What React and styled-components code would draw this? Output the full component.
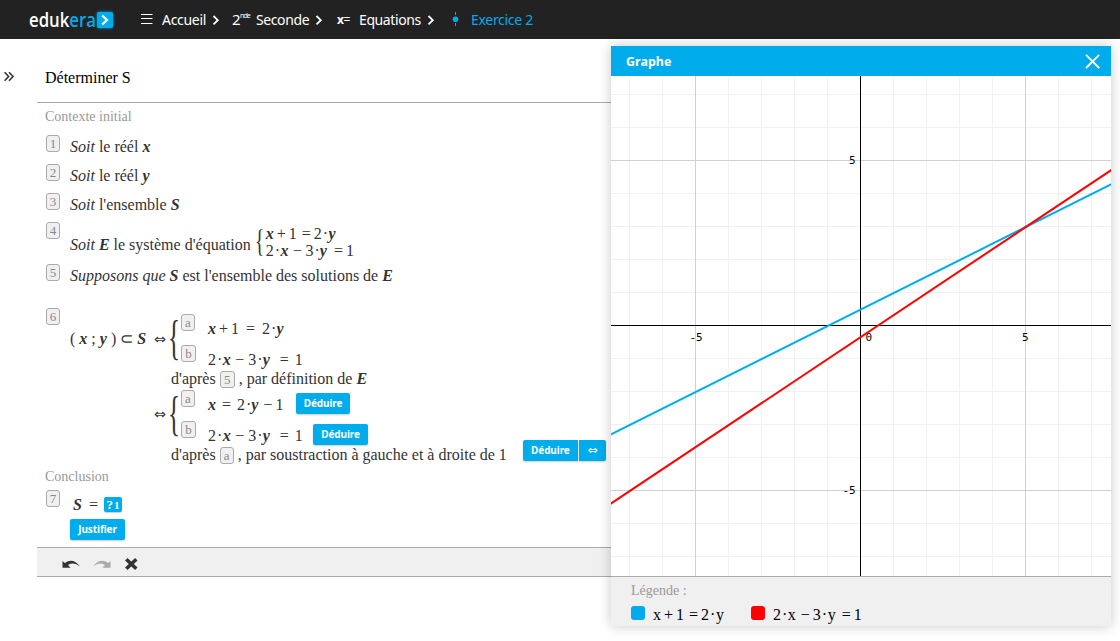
import React from 'react';
import styled, { createGlobalStyle, css } from 'styled-components';

const BLUE = '#00aceb';
const SERIF = '"Liberation Serif", "Times New Roman", serif';
const SANS = '"Noto Sans", "Open Sans", sans-serif';

const Global = createGlobalStyle`
  * { box-sizing: border-box; }
  html, body { margin: 0; background: #fff; }
  body { font: 16px/20px ${SERIF}; color: #333; overflow: hidden; }
`;

const Page = styled.div`
  position: relative;
  width: 1120px;
  height: 641px;
  overflow: hidden;
  display: flex;
  flex-direction: column;
`;

/* ---- top bar ---- */
const TopBar = styled.header`
  height: 39px;
  flex: none;
  display: flex;
  align-items: center;
  padding-left: 29px;
  background: #222;
  color: #fff;
  font-family: ${SANS};
`;
const Logo = styled.a`
  display: flex;
  align-items: center;
  width: 111px;
  height: 23px;
`;
const LogoWord = styled.span`
  font: 600 19.500px/22px "Open Sans", sans-serif;
  flex: none;
  width: 68px;
  white-space: nowrap;
  transform: scaleX(0.86);
  transform-origin: 0 50%;
  em { font-style: normal; color: ${BLUE}; }
`;
const LogoMark = styled.span`
  flex: none;
  width: 16px;
  height: 16px;
  margin-top: 1px;
  border-radius: 2px;
  background: ${BLUE};
  box-shadow: 0 0 3px ${BLUE};
  svg { display: block; }
`;
const Crumb = styled.a`
  display: flex;
  align-items: center;
  height: 23px;
  width: ${(p) => p.$w}px;
  color: ${(p) => (p.$active ? BLUE : '#fff')};
  font-size: 14px;
  line-height: 23px;
  white-space: nowrap;
`;
const CrumbIcon = styled.span`
  display: flex;
  align-items: center;
  flex: none;
  width: ${(p) => p.$w}px;
  height: 23px;
`;
const CrumbText = styled.span`
  letter-spacing: ${(p) => p.$ls ?? -0.3}px;
  flex: none;
  width: ${(p) => p.$w}px;
`;
const Level = styled.span`
  display: flex;
  font-size: 15px;
  sup { font-size: 7px; line-height: 16px; letter-spacing: -1px; margin-left: -0.5px; }
`;
const EqualsIcon = styled.span`
  font-size: 12px;
  letter-spacing: -0.5px;
  padding-left: 1px;
  b { font-size: 12px; line-height: 1; }
`;

/* ---- exercise ---- */
const Body = styled.div`
  display: flex;
  flex: 1;
`;
const Side = styled.div`
  width: 37px;
  padding: 32px 0 0 4px;
  svg { display: block; }
`;
const Exercise = styled.main`
  width: 574px;
  height: 538px;
  display: flex;
  flex-direction: column;
`;
const Title = styled.h1`
  margin: 0;
  height: 64px;
  padding: 29px 0 0 8px;
  font: 16px/20px ${SERIF};
  color: #000;
  border-bottom: 1px solid #aaa;
`;
const Section = styled.h2`
  margin: 0;
  height: ${(p) => p.$h}px;
  padding: ${(p) => p.$top}px 0 0 8px;
  font: 14px/18px ${SERIF};
  color: #999;
`;
const Row = styled.div`
  display: flex;
  height: ${(p) => p.$h}px;
  padding-left: 9px;
`;
const Badge = styled.span`
  display: inline-flex;
  flex: none;
  align-items: center;
  justify-content: center;
  width: ${(p) => p.$w || 14}px;
  height: 17px;
  margin-top: ${(p) => p.$top || 0}px;
  border: 1px solid #aaa;
  border-radius: 3px;
  background: #f0f0f0;
  color: #888;
  font-size: 13px;
  line-height: 15px;
`;
const Content = styled.div`
  margin-left: 10px;
  padding-top: ${(p) => p.$top ?? 2}px;
  white-space: nowrap;
`;
const V = styled.b`
  font-style: italic;
`;
const Op = styled.span`
  margin: 0 ${(p) => p.$r || 0}px 0 ${(p) => p.$l || 0}px;
`;
const WithSystem = styled.div`
  display: flex;
`;
const Statement = styled.div`
  padding-top: 13px;
  margin-right: 4px;
`;
const Brace = styled.span`
  flex: none;
  display: block;
  width: ${(p) => p.$w}px;
  height: ${(p) => p.$size}px;
  margin-top: ${(p) => p.$top}px;
  font-size: ${(p) => p.$size}px;
  line-height: ${(p) => p.$size}px;
  transform: scaleX(${(p) => p.$sx});
  transform-origin: 0 50%;
`;
const Lines = styled.div`
  padding-top: 3px;
  line-height: 17px;
`;
const Derivation = styled.div`
  display: flex;
  height: 76px;
`;
const Lhs = styled.div`
  display: flex;
  width: 98px;
  padding: ${(p) => p.$top}px 2px 0 0;
`;
const Arrow = styled.span`
  margin-left: auto;
  font: 14.500px/20px "DejaVu Sans", sans-serif;
`;
const Rhs = styled.div`
  flex: none;
`;
const Cases = styled.div`
  display: flex;
  height: 61px;
`;
const CaseLine = styled.div`
  display: flex;
  height: 31px;
`;
const CaseExpr = styled.div`
  padding: 11px 0 0 ${(p) => p.$l}px;
  width: ${(p) => p.$w}px;
`;
const Reason = styled.div`
  display: flex;
  height: 20px;
  margin-left: 3px;
  ${Badge} { margin: 2px 4px 0 4px; }
`;
const Button = styled.button`
  display: flex;
  align-items: center;
  justify-content: center;
  width: ${(p) => p.$w}px;
  height: 21px;
  padding: 0 0 2px;
  border: 0;
  border-radius: ${(p) => p.$radius || '2px'};
  background: ${BLUE};
  color: #fff;
  font: 700 10px/14px ${SANS};
  letter-spacing: -0.1px;
  box-shadow: 0 1px 2px rgba(0, 0, 0, 0.2);
  ${(p) => p.$top !== undefined && css`margin-top: ${p.$top}px;`}
`;
const EquivButton = styled(Button)`
  font: 12px/14px "DejaVu Sans", sans-serif;
`;
const ButtonPair = styled.div`
  display: flex;
  gap: 1px;
  margin: -5px 0 0 16px;
`;
const Answer = styled.div`
  display: flex;
  height: 20px;
`;
const Hole = styled.span`
  display: flex;
  align-items: center;
  justify-content: center;
  width: 18px;
  height: 15px;
  margin: 2px 0 0 6px;
  border-radius: 2px;
  background: ${BLUE};
  color: #fff;
  font-weight: 700;
  font-size: 13px;
  line-height: 15px;
  box-shadow: 0 1px 1px rgba(0, 0, 0, 0.2);
  small { font-size: 11px; margin: 2px 0 0 1px; }
`;
const Tools = styled.footer`
  height: 30px;
  margin-top: auto;
  display: flex;
  align-items: center;
  padding: 3px 0 0 25px;
  background: #f0f0f0;
  border-top: 1px solid #aaa;
  border-bottom: 1px solid #aaa;
  svg { display: block; }
`;

/* ---- graph window ---- */
const Window = styled.section`
  position: absolute;
  left: 611px;
  top: 46px;
  width: 500px;
  height: 580px;
  display: flex;
  flex-direction: column;
  background: #fff;
  box-shadow: 0 0 12px rgba(0, 0, 0, 0.22);
`;
const WindowHead = styled.div`
  height: 30px;
  flex: none;
  display: flex;
  align-items: center;
  justify-content: space-between;
  padding: 1px 11px 0 15px;
  background: ${BLUE};
  color: #fff;
  font: 700 12.500px/29px ${SANS};
`;
const Plot = styled.svg`
  display: block;
  flex: none;
  text { font: 11px "DejaVu Sans Mono", monospace; fill: #000; }
`;
const Legend = styled.div`
  flex: 1;
  padding: 5px 0 0 20px;
  border-top: 1px solid #aaa;
  background: #f0f0f0;
  color: #000;
`;
const LegendTitle = styled.div`
  font-size: 14px;
  line-height: 18px;
  color: #999;
`;
const LegendItems = styled.div`
  display: flex;
  padding-top: 4px;
`;
const LegendItem = styled.div`
  display: flex;
  width: ${(p) => p.$w}px;
  line-height: 22px;
  white-space: nowrap;
`;
const Swatch = styled.i`
  width: 14px;
  height: 14px;
  margin: 2px 8px 0 0;
  border-radius: 3px;
  background: ${(p) => p.$color};
`;

const Next = () => (
  <svg width="8" height="13" viewBox="0 0 8 13" fill="none" stroke="#fff" strokeWidth="1.8">
    <path d="M1.5 3 L5.8 7.2 L1.5 11.4" />
  </svg>
);

const UNIT = 33;
const O = 249.5;
const px = (x) => O + x * UNIT;
const py = (y) => O - y * UNIT;
const TICKS = [-7, -6, -5, -4, -3, -2, -1, 1, 2, 3, 4, 5, 6, 7];
const tint = (n) => (n % 5 === 0 ? '#d0d0d0' : '#f1f1f1');

function Graph() {
  const ordered = [...TICKS].sort((a, b) => (a % 5 === 0) - (b % 5 === 0));
  const curve = (f) => `M${px(-8)} ${py(f(-8)) + 0.7} L${px(8)} ${py(f(8)) + 0.7}`;
  return (
    <Plot width="500" height="500" viewBox="0 0 500 500">
      {ordered.map((n) => (
        <g key={n} stroke={tint(n)}>
          <line x1={px(n)} x2={px(n)} y1="0" y2="500" />
          <line y1={py(n)} y2={py(n)} x1="0" x2="500" />
        </g>
      ))}
      <path d={`M${O} 0 V500 M0 ${O} H500`} stroke="#000" />
      <text x="78.500" y="265">-5</text>
      <text x="254.500" y="265">0</text>
      <text x="411" y="265">5</text>
      <text x="238" y="88">5</text>
      <text x="231.500" y="418">-5</text>
      <path d={curve((x) => (x + 1) / 2)} stroke={BLUE} strokeWidth="2" fill="none" />
      <path d={curve((x) => (2 * x - 1) / 3)} stroke="#f00" strokeWidth="2" fill="none" />
    </Plot>
  );
}

const EqB = () => (
  <>2<Op $l={1} $r={0.5}>·</Op><V>x</V><Op $l={4.5} $r={4}>−</Op>3<Op $l={1}>·</Op><V>y</V><Op $l={10} $r={6}>=</Op>1</>
);

export default function App() {
  return (
    <Page>
      <Global />
      <TopBar>
        <Logo>
          <LogoWord>eduk<em>era</em></LogoWord>
          <LogoMark>
            <svg width="16" height="16" viewBox="0 0 16 16" fill="none" stroke="#fff" strokeWidth="2.2">
              <path d="M5.2 3.6 L10 8 L5.2 12.4" />
            </svg>
          </LogoMark>
        </Logo>
        <Crumb $w={92}>
          <CrumbIcon $w={22}>
            <svg width="13" height="13" viewBox="0 0 13 13" stroke="#fff" strokeWidth="1.2">
              <path d="M1 1.5 H12.5 M1 5.5 H12.5 M1 10.5 H12.5" />
            </svg>
          </CrumbIcon>
          <CrumbText $w={50}>Accueil</CrumbText>
          <Next />
        </Crumb>
        <Crumb $w={104}>
          <CrumbIcon $w={24}><Level>2<sup>nde</sup></Level></CrumbIcon>
          <CrumbText $w={59} $ls={-0.4}>Seconde</CrumbText>
          <Next />
        </Crumb>
        <Crumb $w={116}>
          <CrumbIcon $w={23}><EqualsIcon><b>x</b>=</EqualsIcon></CrumbIcon>
          <CrumbText $w={68} $ls={-0.4}>Equations</CrumbText>
          <Next />
        </Crumb>
        <Crumb $active>
          <CrumbIcon $w={19}>
            <svg width="7" height="15" viewBox="0 0 7 15">
              <path d="M3.5 0 V3 M3.5 11 V14" stroke={BLUE} />
              <circle cx="3.5" cy="7.3" r="2.8" fill={BLUE} />
            </svg>
          </CrumbIcon>
          <CrumbText>Exercice 2</CrumbText>
        </Crumb>
      </TopBar>

      <Body>
        <Side>
          <svg width="11" height="11" viewBox="0 0 11 11" fill="none" stroke="#333" strokeWidth="1.6">
            <path d="M0.6 1.200 L4.6 5.5 L0.6 9.800 M5 1.200 L9 5.5 L5 9.800" />
          </svg>
        </Side>
        <Exercise>
          <Title>Déterminer S</Title>
          <Section $h={32} $top={5}>Contexte initial</Section>
          <Row $h={29}>
            <Badge>1</Badge>
            <Content><i>Soit</i> le réél <V>x</V></Content>
          </Row>
          <Row $h={29}>
            <Badge>2</Badge>
            <Content><i>Soit</i> le réél <V>y</V></Content>
          </Row>
          <Row $h={29}>
            <Badge>3</Badge>
            <Content><i>Soit</i> l'ensemble <V>S</V></Content>
          </Row>
          <Row $h={42}>
            <Badge>4</Badge>
            <Content $top={0}>
              <WithSystem>
                <Statement><i>Soit</i> <V>E</V> le système d'équation</Statement>
                <Brace $w={11} $size={32} $sx={0.6} $top={3}>{'{'}</Brace>
                <Lines>
                  <div><V>x</V><Op $l={3} $r={3}>+</Op>1<Op $l={5} $r={3}>=</Op>2<Op $l={1} $r={0.5}>·</Op><V>y</V></div>
                  <div>2<Op $l={1} $r={0.5}>·</Op><V>x</V><Op $l={4.5} $r={3.5}>−</Op>3<Op $l={1}>·</Op><V>y</V><Op $l={7} $r={3}>=</Op>1</div>
                </Lines>
              </WithSystem>
            </Content>
          </Row>
          <Row $h={44}>
            <Badge>5</Badge>
            <Content><i>Supposons que</i> <V>S</V> est l'ensemble des solutions de <V>E</V></Content>
          </Row>
          <Row $h={158}>
            <Badge>6</Badge>
            <Content $top={0}>
              <Derivation>
                <Lhs $top={21}><span>( <V>x</V> ; <V>y</V> ) ⊂ <V>S</V></span><Arrow>⇔</Arrow></Lhs>
                <Rhs>
                  <Cases>
                    <Brace $w={13} $size={48} $sx={0.52} $top={6}>{'{'}</Brace>
                    <div>
                      <CaseLine>
                        <Badge $top={6}>a</Badge>
                        <CaseExpr $l={13}><V>x</V><Op $l={3} $r={3}>+</Op>1<Op $l={7} $r={7}>=</Op>2<Op $l={1}>·</Op><V>y</V></CaseExpr>
                      </CaseLine>
                      <CaseLine>
                        <Badge $w={15} $top={6}>b</Badge>
                        <CaseExpr $l={12}><EqB /></CaseExpr>
                      </CaseLine>
                    </div>
                  </Cases>
                  <Reason>d'après<Badge $w={15}>5</Badge>, par définition de&nbsp;<V>E</V></Reason>
                </Rhs>
              </Derivation>
              <Derivation>
                <Lhs $top={20}><Arrow>⇔</Arrow></Lhs>
                <Rhs>
                  <Cases>
                    <Brace $w={13} $size={48} $sx={0.52} $top={6}>{'{'}</Brace>
                    <div>
                      <CaseLine>
                        <Badge $top={6}>a</Badge>
                        <CaseExpr $l={13} $w={101}><V>x</V><Op $l={6} $r={6}>=</Op>2<Op $l={1}>·</Op><V>y</V><Op $l={5} $r={3}>−</Op>1</CaseExpr>
                        <Button $w={54} $top={9}>Déduire</Button>
                      </CaseLine>
                      <CaseLine>
                        <Badge $w={15} $top={6}>b</Badge>
                        <CaseExpr $l={12} $w={117}><EqB /></CaseExpr>
                        <Button $w={55} $top={9}>Déduire</Button>
                      </CaseLine>
                    </div>
                  </Cases>
                  <Reason>
                    d'après<Badge>a</Badge>, par soustraction à gauche et à droite de 1
                    <ButtonPair>
                      <Button $w={55} $radius="2px 0 0 2px">Déduire</Button>
                      <EquivButton $w={27} $radius="0 2px 2px 0">⇔</EquivButton>
                    </ButtonPair>
                  </Reason>
                </Rhs>
              </Derivation>
            </Content>
          </Row>
          <Section $h={24} $top={2}>Conclusion</Section>
          <Row $h={52}>
            <Badge>7</Badge>
            <Content $top={5}>
              <Answer><Op $l={3}><V>S</V></Op><Op $l={7}>=</Op><Hole>?<small>1</small></Hole></Answer>
              <Button $w={55} $top={4}>Justifier</Button>
            </Content>
          </Row>
          <Tools>
            <svg width="80" height="14" viewBox="0 0 80 14">
              <path d="M0.500 4 L2.800 6 Q11 0 18 9.500 Q12 4.500 6 8 L8.500 10.800 L0.500 10.800 Z" fill="#333" />
              <path d="M48.500 4 L46.200 6 Q38 0 31 9.500 Q37 4.500 43 8 L40.500 10.800 L48.500 10.800 Z" fill="#aaa" />
              <path d="M64.300 2.300 L74.300 11.800 M74.300 2.300 L64.300 11.800" stroke="#333" strokeWidth="3.6" />
            </svg>
          </Tools>
        </Exercise>
      </Body>

      <Window>
        <WindowHead>
          Graphe
          <svg width="15" height="15" viewBox="0 0 15 15" stroke="#fff" strokeWidth="1.900">
            <path d="M1 0.8 L14.2 14 M14.2 0.8 L1 14" />
          </svg>
        </WindowHead>
        <Graph />
        <Legend>
          <LegendTitle>Légende :</LegendTitle>
          <LegendItems>
            <LegendItem $w={120}>
              <Swatch $color={BLUE} />
              <span>x<Op $l={3} $r={3}>+</Op>1<Op $l={5} $r={3}>=</Op>2<Op $l={1} $r={0.5}>·</Op>y</span>
            </LegendItem>
            <LegendItem>
              <Swatch $color="#f00" />
              <span>2<Op $l={1} $r={0.5}>·</Op>x<Op $l={5} $r={3}>−</Op>3<Op $l={1} $r={0.5}>·</Op>y<Op $l={6} $r={3}>=</Op>1</span>
            </LegendItem>
          </LegendItems>
        </Legend>
      </Window>
    </Page>
  );
}
